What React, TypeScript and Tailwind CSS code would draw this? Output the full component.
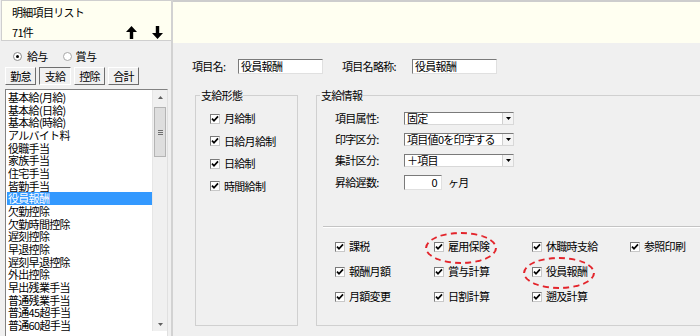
import React from "react";

const items = [
  "基本給(月給)",
  "基本給(日給)",
  "基本給(時給)",
  "アルバイト料",
  "役職手当",
  "家族手当",
  "住宅手当",
  "皆勤手当",
  "役員報酬",
  "欠勤控除",
  "欠勤時間控除",
  "遅刻控除",
  "早退控除",
  "遅刻早退控除",
  "外出控除",
  "早出残業手当",
  "普通残業手当",
  "普通45超手当",
  "普通60超手当",
];

function Check() {
  return (
    <span className="w-[10px] h-[10px] shrink-0 bg-white border border-t-[#7a7a7a] border-l-[#7a7a7a] border-b-[#c8c8c8] border-r-[#c8c8c8] flex items-center justify-center">
      <svg width="8" height="8" viewBox="0 0 8 8">
        <path d="M1 3.6 L3 5.8 L7 1.4" fill="none" stroke="#000" strokeWidth="1.7" />
      </svg>
    </span>
  );
}

function CheckItem({ label, circled }: { label: string; circled?: boolean }) {
  return (
    <div className="relative flex items-center h-[13px] gap-[4px]">
      <Check />
      <span className="leading-[13px]">{label}</span>
      {circled && (
        <span className="absolute left-[-9px] top-[-8px] w-[72px] h-[32px] rounded-[50%] border-2 border-dashed border-[#e3242b]" />
      )}
    </div>
  );
}

function Select({ value }: { value: string }) {
  return (
    <div className="w-[110px] h-[13px] bg-white border border-t-[#7a7a7a] border-l-[#7a7a7a] border-b-[#d8d8d8] border-r-[#d8d8d8] flex items-center">
      <span className="flex-1 pl-[2px] leading-[11px] whitespace-nowrap">{value}</span>
      <span className="w-[11px] h-[11px] bg-[#f4f4f4] border-l border-[#d0d0d0] flex items-center justify-center">
        <svg width="5" height="3" viewBox="0 0 5 3">
          <path d="M0 0 L5 0 L2.5 3 Z" fill="#000" />
        </svg>
      </span>
    </div>
  );
}

function Arrow({ down }: { down?: boolean }) {
  return (
    <svg width="11" height="13" viewBox="0 0 11 13" className={down ? "rotate-180" : ""}>
      <path d="M5.5 0 L11 6 L7.2 6 L7.2 13 L3.8 13 L3.8 6 L0 6 Z" fill="#000" />
    </svg>
  );
}

function Tab({ label, active }: { label: string; active?: boolean }) {
  return (
    <div
      className={
        "h-[18px] flex items-center justify-center bg-[#f0f0f0] border " +
        (active
          ? "w-[32px] border-t-[#6e6e6e] border-l-[#6e6e6e] border-b-white border-r-white"
          : "w-[31px] border-t-white border-l-white border-b-[#6e6e6e] border-r-[#6e6e6e]")
      }
    >
      {label}
    </div>
  );
}

export default function App() {
  return (
    <div className="w-[700px] h-[336px] overflow-hidden flex bg-[#f0f0f0] text-black text-[11px] tracking-[-0.7px] font-['Noto_Sans_CJK_JP','Noto_Sans_CJK_SC',sans-serif]">
      {/* Left pane */}
      <div className="w-[173px] shrink-0 flex flex-col border-r-2 border-[#d2d2d2]">
        <div className="h-[44px] bg-[#fffff1] border-t border-l border-b border-[#cfcfcf] ml-[1px] pl-[10px] pr-[8px] pt-[4px] flex flex-col">
          <div className="leading-[14px] h-[14px]">明細項目リスト</div>
          <div className="mt-[5px] h-[16px] flex items-center">
            <span className="leading-[14px]">71件</span>
            <div className="ml-auto flex items-center gap-[15px]">
              <Arrow />
              <Arrow down />
            </div>
          </div>
        </div>
        <div className="mt-[8px] h-[14px] flex items-center pl-[13px]">
          <span className="w-[9px] h-[9px] rounded-full border border-[#8a8a8a] bg-white flex items-center justify-center">
            <span className="w-[3px] h-[3px] rounded-full bg-black" />
          </span>
          <span className="ml-[5px]">給与</span>
          <span className="ml-[15px] w-[9px] h-[9px] rounded-full border border-[#a8a8a8] bg-white" />
          <span className="ml-[4px]">賞与</span>
        </div>
        <div className="mt-[4px] flex gap-[3px] pl-[5px]">
          <Tab label="勤怠" />
          <Tab label="支給" active />
          <Tab label="控除" />
          <Tab label="合計" />
        </div>
        <div className="mt-[4px] ml-[5px] w-[163px] h-[250px] shrink-0 bg-white border border-t-[#828282] border-l-[#828282] border-b-[#e0e0e0] border-r-[#e0e0e0] flex">
          <div className="flex-1 pt-[1px] pl-[1px]">
            {items.map((it) => (
              <div
                key={it}
                className={
                  "h-[12.67px] leading-[12.67px] pl-[1px] whitespace-nowrap " +
                  (it === "役員報酬" ? "bg-[#3399ff] text-white" : "")
                }
              >
                {it}
              </div>
            ))}
          </div>
          <div className="w-[15px] h-[241px] bg-[#f0f0f0] border-l border-[#e6e6e6] flex flex-col items-center">
            <div className="h-[14px] flex items-center justify-center">
              <svg width="5" height="3" viewBox="0 0 5 3">
                <path d="M0 3 L5 3 L2.5 0 Z" fill="#606060" />
              </svg>
            </div>
            <div className="mt-[3px] w-[12px] h-[50px] bg-[#dedede] border border-[#b4b4b4] flex flex-col items-center justify-center gap-[1px]">
              <span className="w-[5px] h-[1px] bg-[#707070]" />
              <span className="w-[5px] h-[1px] bg-[#707070]" />
              <span className="w-[5px] h-[1px] bg-[#707070]" />
            </div>
            <div className="mt-auto h-[14px] flex items-center justify-center">
              <svg width="5" height="3" viewBox="0 0 5 3">
                <path d="M0 0 L5 0 L2.5 3 Z" fill="#606060" />
              </svg>
            </div>
          </div>
        </div>
      </div>

      {/* Right pane */}
      <div className="flex-1 flex flex-col min-w-0">
        <div className="h-[43px] shrink-0 bg-[#fffff1] border-t-2 border-[#cdcdcd]" />
        <div className="mt-[16px] h-[15px] flex items-center pl-[19px]">
          <span className="w-[46px]">項目名:</span>
          <div className="w-[85px] h-[15px] bg-white border border-t-[#7a7a7a] border-l-[#7a7a7a] border-b-[#e0e0e0] border-r-[#e0e0e0] pl-[2px] leading-[13px]">
            役員報酬
          </div>
          <span className="ml-[19px] w-[70px]">項目名略称:</span>
          <div className="w-[85px] h-[15px] bg-white border border-t-[#7a7a7a] border-l-[#7a7a7a] border-b-[#e0e0e0] border-r-[#e0e0e0] pl-[2px] leading-[13px]">
            役員報酬
          </div>
        </div>

        <div className="mt-[21px] flex pl-[22px] gap-[18px]">
          {/* 支給形態 */}
          <div className="w-[103px] h-[231px] shrink-0 border border-[#d0d0d0]">
            <div className="h-0 relative">
              <span className="absolute left-[4px] top-[-8px] px-[1px] bg-[#f0f0f0] leading-[14px]">支給形態</span>
            </div>
            <div className="pt-[16px] pl-[14px] flex flex-col gap-[9.5px]">
              <CheckItem label="月給制" />
              <CheckItem label="日給月給制" />
              <CheckItem label="日給制" />
              <CheckItem label="時間給制" />
            </div>
          </div>

          {/* 支給情報 */}
          <div className="w-[420px] h-[231px] shrink-0 border border-[#d0d0d0]">
            <div className="h-0 relative">
              <span className="absolute left-[3px] top-[-8px] px-[1px] bg-[#f0f0f0] leading-[14px]">支給情報</span>
            </div>
            <div className="pt-[16px] pl-[18px] flex flex-col gap-[8px]">
              <div className="flex items-center h-[13px]">
                <span className="w-[69px]">項目属性:</span>
                <Select value="固定" />
              </div>
              <div className="flex items-center h-[13px]">
                <span className="w-[69px]">印字区分:</span>
                <Select value="項目値0を印字する" />
              </div>
              <div className="flex items-center h-[13px]">
                <span className="w-[69px]">集計区分:</span>
                <Select value="＋項目" />
              </div>
              <div className="flex items-center h-[15px]">
                <span className="w-[69px]">昇給遅数:</span>
                <div className="w-[38px] h-[15px] bg-white border border-t-[#7a7a7a] border-l-[#7a7a7a] border-b-[#e0e0e0] border-r-[#e0e0e0] pr-[4px] text-right leading-[13px]">
                  0
                </div>
                <span className="ml-[6px]">ヶ月</span>
              </div>
            </div>
            <div className="mt-[36px] ml-[6px] h-[2px] border-t border-[#c4c4c4] border-b border-b-white" />
            <div className="mt-[12px] pl-[18px] grid grid-cols-[99px_98px_98px_98px] gap-y-[12px]">
              <CheckItem label="課税" />
              <CheckItem label="雇用保険" circled />
              <CheckItem label="休職時支給" />
              <CheckItem label="参照印刷" />
              <CheckItem label="報酬月額" />
              <CheckItem label="賞与計算" />
              <CheckItem label="役員報酬" circled />
              <div />
              <CheckItem label="月額変更" />
              <CheckItem label="日割計算" />
              <CheckItem label="遡及計算" />
              <div />
            </div>
          </div>
        </div>
      </div>
    </div>
  );
}
